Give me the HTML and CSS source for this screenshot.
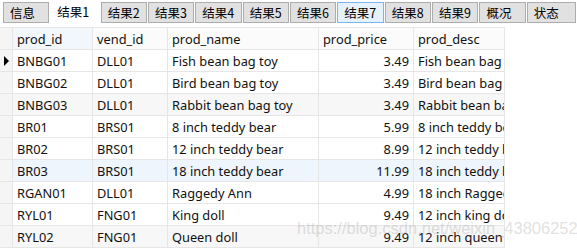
FILE: index.html
```html
<!DOCTYPE html>
<html>
<head>
<meta charset="utf-8">
<link rel="stylesheet" href="styles.css">
</head>
<body>
<div class="tabs">
  <div class="tab">信息</div>
  <div class="tab active">结果1</div>
  <div class="tab">结果2</div>
  <div class="tab">结果3</div>
  <div class="tab">结果4</div>
  <div class="tab">结果5</div>
  <div class="tab">结果6</div>
  <div class="tab hover">结果7</div>
  <div class="tab">结果8</div>
  <div class="tab">结果9</div>
  <div class="tab">概况</div>
  <div class="tab last">状态</div>
</div>
<div class="grid">
  <div class="c ind hd"></div><div class="c hd sel">prod_id</div><div class="c hd">vend_id</div><div class="c hd">prod_name</div><div class="c hd">prod_price</div><div class="c hd">prod_desc</div>

  <div class="c ind"><span class="arrow"></span></div><div class="c">BNBG01</div><div class="c">DLL01</div><div class="c">Fish bean bag toy</div><div class="c num">3.49</div><div class="c clip">Fish bean bag toy</div>
  <div class="c ind"></div><div class="c">BNBG02</div><div class="c">DLL01</div><div class="c">Bird bean bag toy</div><div class="c num">3.49</div><div class="c clip">Bird bean bag toy</div>
  <div class="c ind"></div><div class="c g">BNBG03</div><div class="c g">DLL01</div><div class="c g">Rabbit bean bag toy</div><div class="c g num">3.49</div><div class="c g clip">Rabbit bean bag toy</div>
  <div class="c ind"></div><div class="c">BR01</div><div class="c">BRS01</div><div class="c">8 inch teddy bear</div><div class="c num">5.99</div><div class="c clip">8 inch teddy bear, comes with cap and jacket</div>
  <div class="c ind"></div><div class="c">BR02</div><div class="c">BRS01</div><div class="c">12 inch teddy bear</div><div class="c num">8.99</div><div class="c clip">12 inch teddy bear, comes with cap and jacket</div>
  <div class="c ind"></div><div class="c b">BR03</div><div class="c b">BRS01</div><div class="c b">18 inch teddy bear</div><div class="c b num">11.99</div><div class="c b clip">18 inch teddy bear, comes with cap and jacket</div>
  <div class="c ind"></div><div class="c">RGAN01</div><div class="c">DLL01</div><div class="c">Raggedy Ann</div><div class="c num">4.99</div><div class="c clip">18 inch Raggedy Ann doll</div>
  <div class="c ind"></div><div class="c">RYL01</div><div class="c">FNG01</div><div class="c">King doll</div><div class="c num">9.49</div><div class="c clip">12 inch king doll with royal garments and crown</div>
  <div class="c ind"></div><div class="c g">RYL02</div><div class="c g">FNG01</div><div class="c g">Queen doll</div><div class="c g num">9.49</div><div class="c g clip">12 inch queen doll with royal garments and crown</div>
</div>
<div class="wm">https://blog.csdn.net/weixin_43806252</div>
</body>
</html>
```
FILE: styles.css
```css
html, body {
  margin: 0;
  padding: 0;
  background: #ffffff;
  width: 577px;
  height: 249px;
  overflow: hidden;
  position: relative;
  font-family: "Noto Sans", "Noto Sans CJK SC", sans-serif;
  font-size: 12.8px;
  color: #000;
}
.tabs {
  display: flex;
  align-items: flex-start;
  height: 27px;
  padding-left: 3px;
  box-sizing: border-box;
}
.tab {
  box-sizing: border-box;
  width: 47px;
  height: 21px;
  margin-top: 2px;
  margin-right: 1px;
  background: #e1e1e1;
  border: 1px solid #adadad;
  font-family: "Noto Sans CJK SC", sans-serif;
  font-size: 12.5px;
  line-height: 19px;
  padding-left: 6px;
  white-space: nowrap;
  color: #000;
}
.tab.active {
  background: #fff;
  border-color: #fff;
  margin-top: 0;
  height: 24px;
  width: 50px;
  line-height: 21px;
  padding-left: 6px;
}
.tab.hover {
  background: #e5f1fb;
  border-color: #7eb4ea;
}
.tab.last { width: 50px; }
.grid {
  display: grid;
  grid-template-columns: 13px 80px 75px 151px 95px 91px;
  grid-template-rows: 22px repeat(9, 22px);
  width: 505px;
  border-top: 1px solid #e8e8e8;
}
.c {
  box-sizing: border-box;
  border-right: 1px solid #e6e6e6;
  border-bottom: 1px solid #e6e6e6;
  padding: 0 4px;
  white-space: nowrap;
  overflow: hidden;
  display: flex;
  align-items: center;
  color: #111;
}
.hd { background: #fbfbfb; }
.hd.sel { background: #f2f7fc; }
.ind { background: #f5f5f5; padding: 0; justify-content: center; }
.num { justify-content: flex-end; }
.clip { text-overflow: clip; }
.g { background: #f7f7f7; }
.b { background: #eef5fc; }
.arrow {
  width: 0; height: 0;
  border-top: 5px solid transparent;
  border-bottom: 5px solid transparent;
  border-left: 5px solid #000;
}
.wm {
  position: absolute;
  left: 297px;
  top: 219px;
  font-family: "Liberation Sans", sans-serif;
  font-size: 16.5px;
  color: rgba(150,150,150,0.3);
  white-space: nowrap;
}
```
